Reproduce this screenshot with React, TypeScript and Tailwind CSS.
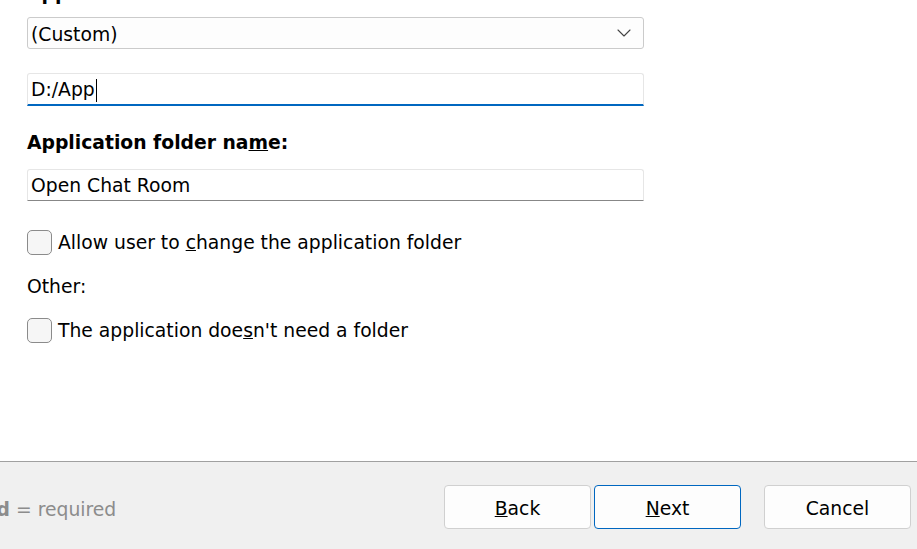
import { ChevronDown } from "lucide-react";

const font = { fontFamily: '"DejaVu Sans", Verdana, sans-serif' };

function Check({ children }: { children: React.ReactNode }) {
    return (
        <label className="flex h-[26px] items-center">
            <span className="h-[25px] w-[25px] rounded-[5px] border border-[#8b8b8b] bg-[#f6f6f6]" />
            <span className="ml-[6px] pt-[2px]">{children}</span>
        </label>
    );
}

export default function App() {
    return (
        <div
            className="flex h-[549px] w-[917px] flex-col overflow-hidden bg-white text-[18.75px] leading-[22px] text-black"
            style={font}
        >
            <div className="flex flex-1 flex-col pl-[27px]">
                <div className="mt-[-17px] font-bold">Application folder:</div>

                <div className="mt-[12px] flex h-[32px] w-[617px] items-center justify-between rounded-[3px] border border-[#cbcbcb] bg-[#fdfdfd] pl-[3px] pr-[7px]">
                    <span className="pt-[3px]">(Custom)</span>
                    <ChevronDown size={24} strokeWidth={1.1} className="text-[#444]" />
                </div>

                <div className="mt-[24px] flex h-[33px] w-[617px] items-center rounded-t-[3px] border border-b-2 border-[#e6e6e6] border-b-[#0067c0] bg-white pl-[3px] pt-[2px]">
                    <span>D:/App</span>
                    <span className="ml-[1px] h-[23px] w-px bg-black" />
                </div>

                <div className="mt-[26px] font-bold">
                    Application folder na<u>m</u>e:
                </div>

                <div className="mt-[15px] flex h-[32px] w-[617px] items-center rounded-t-[3px] border border-[#e6e6e6] border-b-[#878787] bg-white pl-[3px] pt-[2px]">
                    Open Chat Room
                </div>

                <div className="mt-[28px]">
                    <Check>
                        Allow user to <u>c</u>hange the application folder
                    </Check>
                </div>

                <div className="mt-[21px]">Other:</div>

                <div className="mt-[19px]">
                    <Check>
                        The application doe<u>s</u>n't need a folder
                    </Check>
                </div>
            </div>

            <div className="flex h-[88px] items-start border-t border-[#a0a0a0] bg-[#f0f0f0] pr-[6px] pt-[23px]">
                <div className="ml-[-37px] mt-[14px] text-[#8c8c8c]">
                    <span className="font-bold">Bold</span> = required
                </div>
                <div className="ml-auto flex gap-[3px]">
                    <button className="h-[44px] w-[147px] rounded-[4px] border border-[#d0d0d0] bg-[#fdfdfd] pt-[3px]">
                        <u>B</u>ack
                    </button>
                    <button className="h-[44px] w-[147px] rounded-[4px] border border-[#0067c0] bg-[#fdfdfd] pt-[3px]">
                        <u>N</u>ext
                    </button>
                </div>
                <button className="ml-[23px] h-[44px] w-[147px] rounded-[4px] border border-[#d0d0d0] bg-[#fdfdfd] pt-[3px]">
                    Cancel
                </button>
            </div>
        </div>
    );
}
